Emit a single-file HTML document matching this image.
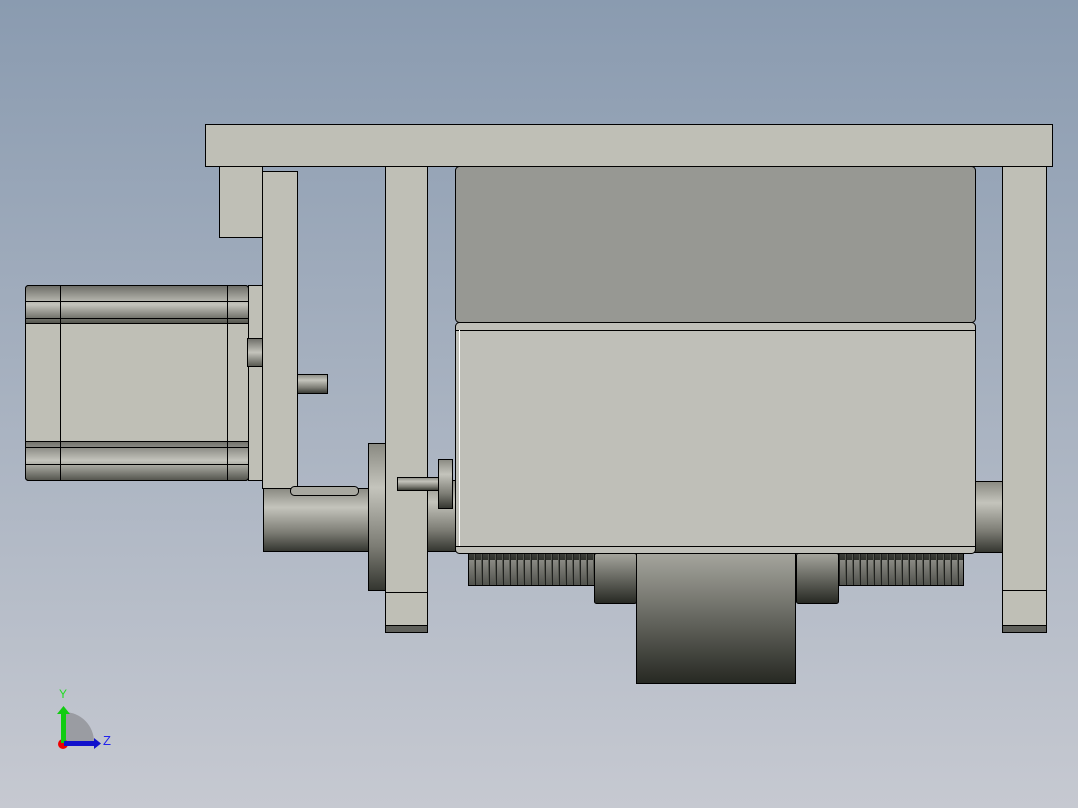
<!DOCTYPE html>
<html><head><style>html,body{margin:0;padding:0;width:1078px;height:808px;overflow:hidden}</style></head>
<body>
<svg width="1078" height="808" viewBox="0 0 1078 808" xmlns="http://www.w3.org/2000/svg">
<defs>
<linearGradient id="bg" x1="0" y1="0" x2="0" y2="1"><stop offset="0" stop-color="#8a9bb0"/><stop offset="1" stop-color="#c6c9d1"/></linearGradient>
<linearGradient id="cyl" x1="0" y1="0" x2="0" y2="1"><stop offset="0" stop-color="#8a8a82"/><stop offset="0.3" stop-color="#c4c4bc"/><stop offset="0.7" stop-color="#7c7c74"/><stop offset="1" stop-color="#33352f"/></linearGradient>
<linearGradient id="band" x1="0" y1="0" x2="0" y2="1"><stop offset="0" stop-color="#6e6e68"/><stop offset="0.5" stop-color="#c4c4bc"/><stop offset="1" stop-color="#55564f"/></linearGradient>
<linearGradient id="dk" x1="0" y1="0" x2="0" y2="1"><stop offset="0" stop-color="#a5a59d"/><stop offset="1" stop-color="#262822"/></linearGradient>
<linearGradient id="tooth" x1="0" y1="0" x2="0" y2="1"><stop offset="0" stop-color="#8a8a84"/><stop offset="1" stop-color="#2e302b"/></linearGradient>
<pattern id="teeth" x="468" y="0" width="7" height="40" patternUnits="userSpaceOnUse"><rect x="0" y="0" width="7" height="40" fill="#55574f"/><rect x="1" y="0" width="5" height="40" fill="url(#tooth)"/><line x1="0.5" y1="0" x2="0.5" y2="40" stroke="#111" stroke-width="0.8"/></pattern>
</defs>
<rect width="1078" height="808" fill="url(#bg)"/>
<g stroke="#000" stroke-width="1">
<!-- top plate -->
<rect x="205.5" y="124.5" width="847" height="42" fill="#bfbfb6"/>
<rect x="219.5" y="166.5" width="43" height="71" fill="#bfbfb6"/>
<!-- motor -->
<rect x="25.5" y="285.5" width="223" height="195" fill="#bfbfb6" rx="3"/>
<rect x="26" y="286" width="222" height="37" fill="url(#band)" stroke="none"/>
<rect x="26" y="441" width="222" height="39" fill="url(#band)" stroke="none"/>
<line x1="25" y1="301.5" x2="248" y2="301.5"/><line x1="25" y1="318.5" x2="248" y2="318.5"/><line x1="25" y1="323.5" x2="248" y2="323.5"/>
<line x1="25" y1="441.5" x2="248" y2="441.5"/><line x1="25" y1="447.5" x2="248" y2="447.5"/><line x1="25" y1="464.5" x2="248" y2="464.5"/>
<line x1="60.5" y1="285" x2="60.5" y2="480"/><line x1="227.5" y1="285" x2="227.5" y2="480"/>
<rect x="25.5" y="285.5" width="223" height="195" fill="none" rx="3"/>
<rect x="248.5" y="285.5" width="14" height="195" fill="#bfbfb6"/>
<rect x="247.5" y="338.5" width="15" height="28" fill="url(#band)"/>
<rect x="262.5" y="171.5" width="35" height="317" fill="#bfbfb6"/>
<rect x="297.5" y="374.5" width="30" height="19" fill="url(#cyl)"/>
<!-- bearing housing -->
<rect x="263.5" y="488.5" width="105" height="63" fill="url(#cyl)"/>
<rect x="290.5" y="486.5" width="68" height="9" rx="4" fill="#a8a8a0"/>
<rect x="368.5" y="443.5" width="17" height="147" fill="url(#cyl)"/>
<rect x="427.5" y="480.5" width="28" height="71" fill="url(#cyl)"/>
<rect x="385.5" y="166.5" width="42" height="426" fill="#bfbfb6"/>
<rect x="385.5" y="592.5" width="42" height="33" fill="#bfbfb6"/>
<rect x="385.5" y="625.5" width="42" height="7" fill="#5f605b"/>
<rect x="397.5" y="477.5" width="43" height="13" fill="url(#cyl)"/>
<rect x="438.5" y="459.5" width="14" height="49" fill="url(#cyl)"/>
<!-- right shaft/plate -->
<rect x="974.5" y="481.5" width="28" height="71" fill="url(#cyl)"/>
<rect x="1002.5" y="166.5" width="44" height="424" fill="#bfbfb6"/>
<rect x="1002.5" y="590.5" width="44" height="35" fill="#bfbfb6"/>
<rect x="1002.5" y="625.5" width="44" height="7" fill="#5f605b"/>
<!-- gears -->
<rect x="468.5" y="553.5" width="126" height="32" fill="url(#teeth)"/>
<rect x="838.5" y="553.5" width="125" height="32" fill="url(#teeth)"/>
<rect x="594.5" y="553.5" width="42" height="50" fill="url(#dk)" rx="2"/>
<rect x="796.5" y="553.5" width="42" height="50" fill="url(#dk)" rx="2"/>
<rect x="636.5" y="553.5" width="159" height="130" fill="url(#dk)"/>
<!-- main body -->
<rect x="455.5" y="166.5" width="520" height="156" fill="#979893" rx="4"/>
<rect x="455.5" y="322.5" width="520" height="231" fill="#bfbfb8" rx="4"/>
<line x1="456" y1="330.5" x2="975" y2="330.5"/>
<line x1="456" y1="546.5" x2="975" y2="546.5"/>
<line x1="459.5" y1="330" x2="459.5" y2="546" stroke="#fff"/>
</g>
<!-- triad -->
<path d="M64 742 L64 712 A30 30 0 0 1 94 742 Z" fill="#9a9ca2"/>
<circle cx="63" cy="744" r="5" fill="#e00"/>
<rect x="61" y="712" width="5" height="31" fill="#1c1"/>
<polygon points="57,714 63.5,706 70,714" fill="#1c1"/>
<rect x="64" y="741" width="32" height="5" fill="#11c"/>
<polygon points="94,738 101,743.5 94,749" fill="#11c"/>
<text x="59" y="698" font-family="Liberation Sans, sans-serif" font-size="12" fill="#2d2">Y</text>
<text x="103" y="745" font-family="Liberation Sans, sans-serif" font-size="13" fill="#22e">Z</text>
</svg>
</body></html>
